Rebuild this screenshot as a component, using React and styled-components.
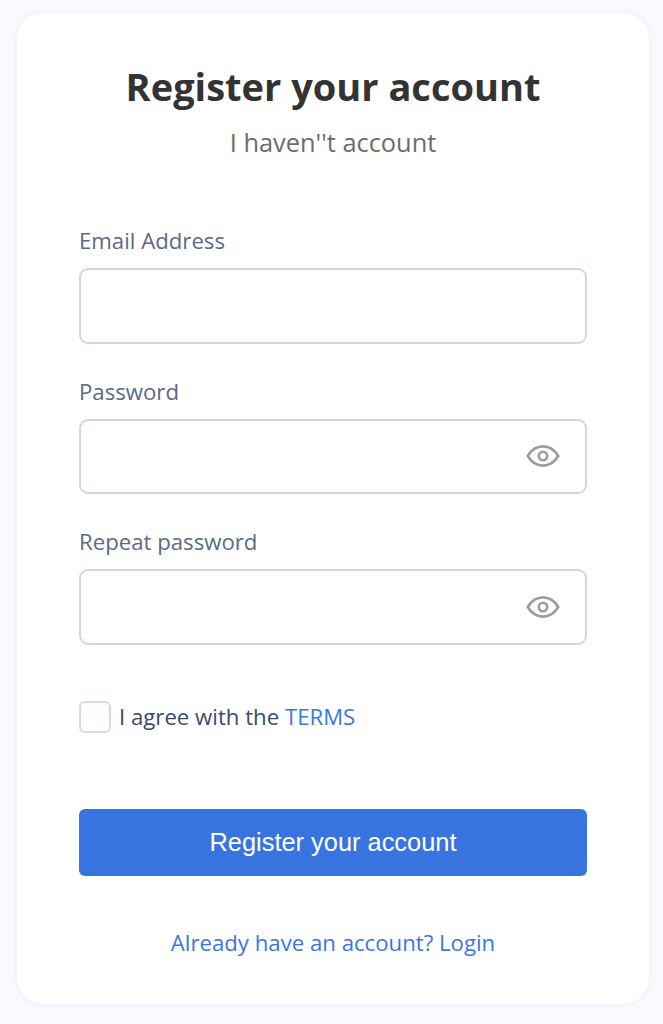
import { useState } from "react";
import styled, { createGlobalStyle } from "styled-components";

const GlobalStyle = createGlobalStyle`
    * {
        box-sizing: border-box;
    }

    html,
    body {
        margin: 0;
        background: #f9faff;
        font-family: "Open Sans", sans-serif;
    }
`;

function EyeIcon() {
    return (
        <svg width="34" height="24" viewBox="0 0 34 24" fill="none" stroke="#9c9c9c" strokeWidth="2.6">
            <path d="M1.8 12C5.6 5.6 10.8 2.4 17 2.4S28.4 5.6 32.2 12C28.4 18.4 23.2 21.6 17 21.6S5.6 18.4 1.8 12Z" />
            <circle cx="17" cy="12" r="4.2" />
        </svg>
    );
}

function Field({ label, type = "text", withEye }) {
    return (
        <FieldWrap>
            <Label>{label}</Label>
            <InputWrap>
                <Input type={type} />
                {withEye && (
                    <EyeButton type="button">
                        <EyeIcon />
                    </EyeButton>
                )}
            </InputWrap>
        </FieldWrap>
    );
}

function App() {
    const [agreed, setAgreed] = useState(false);

    return (
        <Page>
            <GlobalStyle />
            <Card>
                <Title>Register your account</Title>
                <Subtitle>I haven''t account</Subtitle>
                <Form onSubmit={(e) => e.preventDefault()}>
                    <Field label="Email Address" />
                    <Field label="Password" type="password" withEye />
                    <Field label="Repeat password" type="password" withEye />
                    <AgreeRow>
                        <Checkbox
                            type="checkbox"
                            checked={agreed}
                            onChange={(e) => setAgreed(e.target.checked)}
                        />
                        <span>
                            I agree with the <TextLink href="#">TERMS</TextLink>
                        </span>
                    </AgreeRow>
                    <SubmitButton type="submit">Register your account</SubmitButton>
                </Form>
                <LoginLink href="#">Already have an account? Login</LoginLink>
            </Card>
        </Page>
    );
}

const Page = styled.div`
    width: 663px;
    height: 1024px;
    padding: 13px 14px 20px 17px;
    overflow: hidden;
`;

const Card = styled.div`
    display: flex;
    flex-direction: column;
    height: 991px;
    padding: 47px 62px 0;
    background: #fff;
    border-radius: 26px;
    box-shadow: 0 0 4px 1px #eceefc;
`;

const Title = styled.h1`
    margin: 0;
    font-size: 38px;
    line-height: 52px;
    font-weight: 700;
    color: #333;
    text-align: center;
`;

const Subtitle = styled.p`
    margin: 12px 0 0;
    font-size: 25.4px;
    line-height: 36px;
    font-weight: 400;
    color: #6c6c6c;
    text-align: center;
`;

const Form = styled.form`
    display: flex;
    flex-direction: column;
    margin-top: 66px;
`;

const FieldWrap = styled.div`
    display: flex;
    flex-direction: column;
    margin-bottom: 33px;
`;

const Label = styled.label`
    margin-bottom: 12px;
    font-size: 22.2px;
    line-height: 30px;
    color: #5b6a87;
`;

const InputWrap = styled.div`
    position: relative;
`;

const Input = styled.input`
    display: block;
    width: 100%;
    height: 75.5px;
    padding: 0 70px 0 18px;
    background: #fff;
    border: 2px solid #cdd6ea;
    border-radius: 9px;
    outline: none;
    font-family: inherit;
    font-size: 21px;
`;

const EyeButton = styled.button`
    position: absolute;
    top: 50%;
    right: 27px;
    display: flex;
    padding: 0;
    background: none;
    border: none;
    transform: translateY(-50%);
    cursor: pointer;
`;

const AgreeRow = styled.label`
    display: flex;
    align-items: center;
    gap: 8px;
    margin-top: 23.5px;
    font-size: 22.2px;
    line-height: 32px;
    color: #3c4a6b;
`;

const Checkbox = styled.input`
    width: 32px;
    height: 32px;
    margin: 0;
    background: #fff;
    border: 2px solid #d3d9ec;
    border-radius: 6px;
    appearance: none;
`;

const TextLink = styled.a`
    color: #3a76e3;
    text-decoration: none;
`;

const SubmitButton = styled.button`
    height: 67.5px;
    margin-top: 75.5px;
    background: #3874e0;
    border: none;
    border-radius: 6px;
    font-family: "Liberation Sans", Arial, sans-serif;
    font-size: 25.4px;
    color: #fff;
    cursor: pointer;
`;

const LoginLink = styled.a`
    margin-top: 51px;
    font-size: 22.2px;
    line-height: 32px;
    color: #3a76e3;
    text-align: center;
    text-decoration: none;
`;

export default App;
